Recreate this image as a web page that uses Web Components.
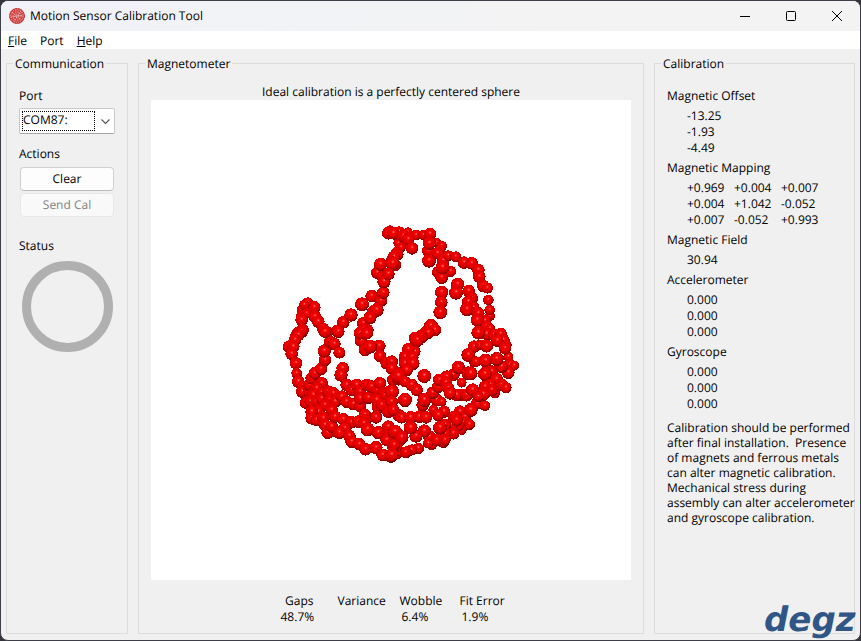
<!DOCTYPE html>
<html lang="en">
<head>
<meta charset="utf-8">
<title>Motion Sensor Calibration Tool</title>
<style>
  html { background: #33343c; }
  body { margin: 0; font: 12px/16px "Open Sans", "Noto Sans", sans-serif; color: #000; text-rendering: geometricPrecision; }
</style>
</head>
<body>
<calibration-app></calibration-app>

<script>
const define = (name, html, setup) => {
  const template = document.createElement('template');
  template.innerHTML = '<style>*{box-sizing:border-box}button,select{font:inherit;color:inherit;text-rendering:inherit}</style>' + html;
  customElements.define(name, class extends HTMLElement {
    connectedCallback() {
      if (this.shadowRoot) return;
      this.attachShadow({ mode: 'open' }).append(template.content.cloneNode(true));
      if (setup) setup(this, this.shadowRoot);
    }
  });
};

define('title-bar', `
<style>
  :host { display: flex; align-items: center; height: 30px; padding-left: 8px; background: linear-gradient(90deg, #f0f2f8, #f3f3f3 70%); }
  h1 { flex: 1; margin: 0 0 0 5px; font: inherit; }
  button { display: grid; place-items: center; width: 46px; height: 28px; padding: 0; border: 0; background: none; }
  svg { display: block; }
</style>
<svg width="16" height="16" viewBox="0 0 16 16" aria-hidden="true">
  <circle cx="8" cy="8" r="7.7" fill="#cf3a3a"/>
  <g fill="none" stroke="#f3d4d4" stroke-width=".8" stroke-dasharray="1.4 1">
    <circle cx="8" cy="8" r="6.2"/><circle cx="8" cy="8" r="4.1"/><circle cx="8" cy="8" r="2"/>
    <path d="M3 4l9 8M12 3l-7 10M2 9l12-2"/>
  </g>
  <circle cx="8" cy="8" r="7.5" fill="none" stroke="#b92424" stroke-width=".8" stroke-dasharray="2 1"/>
</svg>
<h1><slot></slot></h1>
<button aria-label="Minimize"><svg width="10" height="10"><path d="M0 5.500h10" stroke="#000"/></svg></button>
<button aria-label="Maximize"><svg width="10" height="10"><rect x=".5" y=".5" width="9" height="9" rx="1" fill="none" stroke="#000"/></svg></button>
<button aria-label="Close"><svg width="10" height="10"><path d="M0 0l10 10M10 0L0 10" stroke="#000" fill="none"/></svg></button>
`);

define('menu-bar', `
<style>
  :host { display: block; background: #fff; }
  nav { display: flex; gap: 13px; height: 18px; padding: 2px 7px 0; }
  button { padding: 0; border: 0; background: none; line-height: 16px; }
</style>
<nav><button><u>F</u>ile</button><button>Port</button><button><u>H</u>elp</button></nav>
`);

define('group-box', `
<style>
  :host { display: grid; min-width: 0; }
  fieldset { min-width: 0; margin: 0; padding: 0 12px 8px; border: 1px solid #dcdcdc; }
  legend { margin-left: -6px; padding: 0 2px; line-height: 15px; }
</style>
<fieldset><legend></legend><slot></slot></fieldset>
`, (host, root) => { root.querySelector('legend').textContent = host.getAttribute('label'); });

define('port-picker', `
<style>
  :host { display: block; }
  label { display: block; margin-bottom: 4px; }
  .box { position: relative; width: 96px; }
  select { display: block; width: 100%; height: 26px; padding: 0 22px 2px 3px; border: 1px solid #c9c9c9; border-bottom-color: #a6a6a6; border-radius: 2px; background: #fff; appearance: none; outline: 0; }
  .focus { position: absolute; inset: 3px 20px 3px 3px; border: 1px dotted #000; pointer-events: none; }
  svg { position: absolute; right: 5px; top: 10px; pointer-events: none; }
</style>
<label for="port">Port</label>
<div class="box">
  <select id="port"><option>COM87:</option></select>
  <span class="focus"></span>
  <svg width="9" height="7" viewBox="0 0 9 7"><path d="M.5 1.500l4 4 4-4" fill="none" stroke="#555" stroke-width="1.100"/></svg>
</div>
`);

define('push-button', `
<style>
  :host { display: block; margin: 0 1px; }
  button { display: block; width: 94px; height: 24px; padding: 0; border: 1px solid #d0d0d0; border-bottom-color: #bcbcbc; border-radius: 4px; background: #fdfdfd; }
  button:disabled { color: #838383; background: #f9f9f9; border-color: #e8e8e8; }
</style>
<button><slot></slot></button>
`, (host, root) => { root.querySelector('button').disabled = host.hasAttribute('disabled'); });

define('status-ring', `
<style>
  :host { display: block; width: 91px; height: 91px; margin: 7px 3px 0; border: 9px solid #b0b0b0; border-radius: 50%; }
</style>
`);

define('reading-list', `
<style>
  :host { display: block; margin-bottom: 4px; }
  h2 { margin: 0 0 4px; font: inherit; }
  table { margin-left: 20px; border-collapse: collapse; }
  td { min-width: 47px; width: 47px; padding: 0; white-space: nowrap; }
</style>
<h2></h2><table><tbody></tbody></table>
`, (host, root) => {
  root.querySelector('h2').textContent = host.getAttribute('label');
  for (const line of host.getAttribute('values').split(';')) {
    const row = root.querySelector('tbody').insertRow();
    for (const value of line.split(' ')) row.insertCell().textContent = value;
  }
});

define('quality-table', `
<style>
  :host { display: flex; justify-content: center; margin-top: 13px; }
  table { border-collapse: collapse; table-layout: fixed; width: 221px; }
  th, td { padding: 0; font-weight: normal; text-align: left; white-space: nowrap; }
  th:first-child, td:first-child { padding-right: 24px; text-align: right; }
  td + td { padding-left: 2px; }
</style>
<table>
  <colgroup><col style="width:57px"><col style="width:62px"><col style="width:60px"><col style="width:42px"></colgroup>
  <thead><tr><th>Gaps</th><th>Variance</th><th>Wobble</th><th>Fit Error</th></tr></thead>
  <tbody><tr><td>48.7%</td><td></td><td>6.4%</td><td>1.9%</td></tr></tbody>
</table>
`);

/* Sample clusters: an origin on the 480-unit plot, then x,y[,radius] in thirds of a unit. */
const CLUSTERS = [
  [119, 110, `95,298,14 113,278,15 113,303,16 133,292 103,285,15 95,320,17 110,310,15 95,330 135,320 145,335 160,357 170,367 98,360 85,368 80,375 203,362 220,337 243,315,19 276,283,20 305,258 333,272 340,248 342,190,16 357,193,16 322,188 338,200 342,215,19 332,163,19 380,130 368,147 375,165 360,65 355,70 373,70 385,100,14 280,340 292,360 280,360 275,375 310,305 320,300,20 300,323,19`],
  [239, 110, `53,67,14 28,65,15 10,70 78,75,15 100,75,15 125,75,13 120,72 40,78 55,88 33,112,14 66,115,18 22,133 12,140 8,160,20 -5,192 140,97,13 155,108,15 115,123,18 118,100,19 117,152,20 150,120,15 143,130 160,152 145,187,18 182,184,16 155,203,18 158,172,20 175,137,15 197,140,15 222,158 245,160 265,180 268,200 280,228 292,234,16 295,270,15 300,318,14 299,300,15 203,223,19 198,248,20 236,243 245,265 235,275 250,293 231,298,20 265,310,18 285,332,17 262,330,19 290,350 300,355,14 155,247,19 154,277,18 151,307,20 123,348,20 108,365,17 93,378,18 75,385`],
  [119, 230, `95,5 85,15 75,30 57,50 70,50 65,72 78,100 80,130,15 85,155 100,170 97,185 118,185 118,165 125,145 135,130 153,117 165,90 163,63,19 180,35 193,42 208,68,17 165,5 205,5 218,115,18 213,135,19 155,160 140,175 130,195 155,190 108,218 122,215 140,215 155,205 175,185 190,190 180,210 195,215 165,225 185,240 145,245 125,245 125,265 140,270 160,265 165,285 180,305 173,308 185,290 195,260 215,200 230,215 250,222 270,228 230,165 245,180 260,165 270,185 290,165 270,205 295,203 305,170 322,180 330,160 340,190 345,195 368,185 365,215 320,210 325,232 335,225 355,245 385,255 318,262 285,255 285,270 220,268,18 245,277,18 265,275,18 282,280 293,298,20 325,308,19 355,290 358,310 350,330 372,305,20 370,350 385,335 225,295 208,308 238,318 245,335 268,343,18 287,358 318,353,19 338,375 363,380 380,370 273,32 270,10 290,10 285,60 328,48 300,50,20 330,78 350,100 365,95 365,115 370,150 385,130 385,148`],
  [239, 230, `135,0 115,8 95,22 82,30,20 75,65,16 55,58,18 45,80 67,82 45,100 68,100,20 50,120 5,95 5,115 25,138,22 45,155,16 65,165 80,180 103,138,20 5,185,21 5,215 45,210,20 10,240 35,262,18 62,262,18 88,260,18 108,262,18 98,225 140,210 155,215,14 103,210,20 128,188 190,135 145,170 170,140 148,150 168,158 205,112,19 215,158,14 220,195 200,195 175,175 180,190,18 230,195,19 248,180,19 130,240,14 162,245 145,255 210,245 225,260 195,262,20 262,220 285,227,15 242,240,20 235,130,20 242,130,20 252,95,15 252,50,18 270,45,15 290,48,19 235,75,20 258,95,15 287,92,20 305,125 285,132,20 345,55 355,80,14 360,105 373,107,14 355,128 335,110 320,87,20 320,148 335,165 348,173,16 300,165 285,170 315,190,14 305,180 280,193,19 265,200,15 290,12 312,15 332,12 265,8,20 340,30 322,32 350,45,14 345,55 220,280 238,283,16 215,300,14 205,285 185,285 190,310 165,285 165,310 150,293,20 160,335 125,345,15 118,320 115,340,15 140,330 103,303,19 85,355,16 65,360,16 47,367,17 78,318,19 62,293,20 15,305,20 35,322,20 20,350,16 12,345 5,375,20 165,330,16 200,270`]
];

define('sphere-plot', `
<style>
  :host { display: block; aspect-ratio: 1; background: #fff; }
  svg { display: block; width: 100%; height: 100%; }
</style>
<svg viewBox="0 0 480 480" role="img" aria-label="Magnetometer samples" shape-rendering="crispEdges">
  <defs><radialGradient id="ball" cx=".43" cy=".38" r=".69" fx=".52" fy=".4">
    <stop offset="0" stop-color="#ff8080"/><stop offset=".1" stop-color="#ff3030"/>
    <stop offset=".2" stop-color="#f60000"/><stop offset=".55" stop-color="#dc0000"/>
    <stop offset=".8" stop-color="#a00000"/><stop offset="1" stop-color="#380000"/>
  </radialGradient></defs>
</svg>
`, (host, root) => {
  const svg = root.querySelector('svg');
  for (const [ox, oy, list] of CLUSTERS) for (const item of list.split(' ')) {
    const [x, y, r = 18] = item.split(',').map(Number);
    const ball = document.createElementNS('http://www.w3.org/2000/svg', 'circle');
    ball.setAttribute('cx', ox + x / 3);
    ball.setAttribute('cy', oy + y / 3);
    ball.setAttribute('r', (r + 1) / 3);
    ball.setAttribute('fill', 'url(#ball)');
    svg.append(ball);
  }
});

define('brand-mark', `
<style>
  :host { display: block; color: #2f5684; }
  svg { display: block; }
  text { font: italic bold 34px "DejaVu Sans", sans-serif; fill: currentColor; }
</style>
<svg width="98" height="41" role="img" aria-label="degz"><text x="2" y="32">degz</text></svg>
`);

define('calibration-app', `
<style>
  :host { display: flex; flex-direction: column; position: relative; min-height: 100vh; overflow: hidden; box-sizing: border-box; border: 1px solid #3d3e48; border-radius: 8px; background: #f0f0f0; }
  main { flex: 1; display: grid; grid-template-columns: 122px minmax(0, 1fr) 201px; gap: 10px; padding: 7px 5px 6px; }
  .side { padding-top: 17px; }
  .side p { margin: 12px 0 5px; }
  .side push-button + push-button { margin-top: 2px; }
  .side .status { margin: 21px 0 0; }
  .plot { padding-top: 13px; text-align: center; }
  .plot p { margin: 0; }
  .side .note { margin: 8px -11px 0 0; line-height: 15px; white-space: pre; }
  brand-mark { position: absolute; right: 0; bottom: 0; }
</style>
<title-bar>Motion Sensor Calibration Tool</title-bar>
<menu-bar></menu-bar>
<main>
  <group-box label="Communication"><div class="side">
    <port-picker></port-picker>
    <p>Actions</p>
    <push-button>Clear</push-button>
    <push-button disabled>Send Cal</push-button>
    <p class="status">Status</p>
    <status-ring></status-ring>
  </div></group-box>
  <group-box label="Magnetometer"><div class="plot">
    <p>Ideal calibration is a perfectly centered sphere</p>
    <sphere-plot></sphere-plot>
    <quality-table></quality-table>
  </div></group-box>
  <group-box label="Calibration"><div class="side">
    <reading-list label="Magnetic Offset" values="-13.25;-1.93;-4.49"></reading-list>
    <reading-list label="Magnetic Mapping" values="+0.969 +0.004 +0.007;+0.004 +1.042 -0.052;+0.007 -0.052 +0.993"></reading-list>
    <reading-list label="Magnetic Field" values="30.94"></reading-list>
    <reading-list label="Accelerometer" values="0.000;0.000;0.000"></reading-list>
    <reading-list label="Gyroscope" values="0.000;0.000;0.000"></reading-list>
    <p class="note">Calibration should be performed
after final installation.  Presence
of magnets and ferrous metals
can alter magnetic calibration.
Mechanical stress during
assembly can alter accelerometer
and gyroscope calibration.</p>
  </div></group-box>
</main>
<brand-mark></brand-mark>
`);
</script>
</body>
</html>
